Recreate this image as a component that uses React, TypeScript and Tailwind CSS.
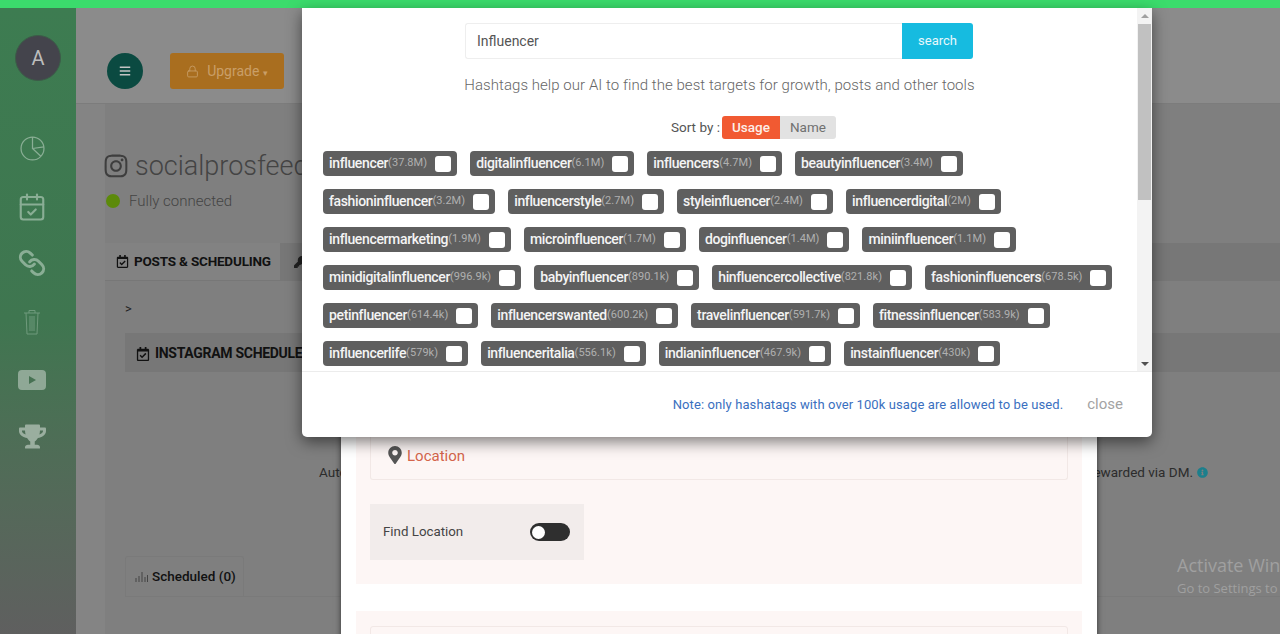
import { CalendarCheck, Link, Lock } from 'lucide-react'
import { FaBars, FaInfoCircle, FaInstagram, FaMapMarkerAlt, FaRegCalendarCheck, FaTrophy, FaKey } from 'react-icons/fa'

const rows: [string, string][][] = [
  [['influencer', '37.8M'], ['digitalinfluencer', '6.1M'], ['influencers', '4.7M'], ['beautyinfluencer', '3.4M']],
  [['fashioninfluencer', '3.2M'], ['influencerstyle', '2.7M'], ['styleinfluencer', '2.4M'], ['influencerdigital', '2M']],
  [['influencermarketing', '1.9M'], ['microinfluencer', '1.7M'], ['doginfluencer', '1.4M'], ['miniinfluencer', '1.1M']],
  [['minidigitalinfluencer', '996.9k'], ['babyinfluencer', '890.1k'], ['hinfluencercollective', '821.8k'], ['fashioninfluencers', '678.5k']],
  [['petinfluencer', '614.4k'], ['influencerswanted', '600.2k'], ['travelinfluencer', '591.7k'], ['fitnessinfluencer', '583.9k']],
  [['influencerlife', '579k'], ['influenceritalia', '556.1k'], ['indianinfluencer', '467.9k'], ['instainfluencer', '430k']],
]

function Chip({ name, count }: { name: string; count: string }) {
  return (
    <div className="flex h-[25px] items-center rounded-[4px] bg-[#5f5f5f] pl-[6px] pr-[6px]">
      <span className="text-[14px] font-medium tracking-[-0.36px] text-[#f4f4f4]">{name}</span>
      <span className="text-[11px] tracking-[0.05px] text-[#b0b0b0]">({count})</span>
      <span className="ml-[8px] h-[16px] w-[16px] rounded-[3px] bg-white"></span>
    </div>
  )
}

export default function App() {
  return (
    <div className="relative flex h-[634px] w-[1280px] flex-col overflow-hidden bg-[#7c7c7c] font-['Roboto',sans-serif]">
      <div className="h-2 shrink-0 bg-[#3bdc6c]"></div>

      <div className="flex min-h-0 flex-1">
        <aside className="flex w-[76px] shrink-0 flex-col items-center bg-gradient-to-b from-[#3d7c51] via-[#3f7650] via-50% to-[#5f5f5f]">
          <div className="mt-[27px] flex h-[46px] w-[46px] items-center justify-center rounded-full border border-[#3c5c48] bg-[#44444c] text-[20px] text-[#bdbdbd]">
            A
          </div>
          <div className="flex flex-col items-center pr-[12px] text-[#8aae95]">
            <svg className="mt-[55px] h-[25px] w-[25px]" viewBox="0 0 24 24" fill="none" stroke="currentColor" strokeWidth="1.2">
              <circle cx="12" cy="12" r="11" />
              <path d="M12 1v11l8 7.5M12 12l11-1.5" />
            </svg>
            <CalendarCheck className="mt-[31px] h-[30px] w-[30px]" strokeWidth={1.7} />
            <Link className="mt-[27px] h-[28px] w-[28px] -scale-x-100" strokeWidth={2.6} />
            <svg className="mt-[32px] h-[26px] w-[18px] text-[#6f9a7c]" viewBox="0 0 18 26" fill="none" stroke="currentColor" strokeWidth="1">
              <path d="M1 4h16M6 4V1.5h6V4M3 4l1 21h10l1-21M7 7v15M9 7v15M11 7v15" />
            </svg>
            <svg className="mt-[30px] h-[30px] w-[28px] text-[#8fa896]" viewBox="0 0 28 30" fill="currentColor">
              <path fillRule="evenodd" d="M4 5h20a4 4 0 0 1 4 4v12a4 4 0 0 1-4 4H4a4 4 0 0 1-4-4V9a4 4 0 0 1 4-4zm7 6v8l7-4z" />
            </svg>
            <FaTrophy className="mt-[28px] h-[27px] w-[27px] text-[#9aae9f]" />
          </div>
        </aside>

        <main className="flex min-w-0 flex-1 flex-col">
          <header className="flex h-[96px] shrink-0 items-center border-b border-[#7c7c7c] bg-[#8b8b8b] pl-[31px] pt-[31px]">
            <div className="flex h-[36px] w-[36px] items-center justify-center rounded-full bg-[#0b4a41] text-[#c4c4c4]">
              <FaBars className="h-[12px] w-[12px]" />
            </div>
            <div className="ml-[27px] flex h-[36px] w-[114px] items-center justify-center gap-[8px] rounded-[3px] bg-[#a96e1f] text-[14px] text-[#c99f68]">
              <Lock className="h-[13px] w-[13px]" strokeWidth={1.6} />
              <span>
                Upgrade <span className="text-[9px]">▾</span>
              </span>
            </div>
          </header>

          <div className="relative flex-1 bg-[#848484] pl-[29px]">
            <div className="flex h-full flex-col bg-[#7f7f7f]">
              <div className="-ml-[2px] flex items-center pt-[47px] text-[#3e3e3e]">
                <FaInstagram className="h-[26px] w-[26px]" />
                <span className="ml-[6px] text-[27px] leading-[30px] font-light text-[#444]">socialprosfeed</span>
              </div>
              <div className="mt-[10px] flex items-center">
                <span className="ml-[1px] h-[14px] w-[14px] rounded-full bg-[#5c8a0a]"></span>
                <span className="ml-[9px] text-[15px] leading-[20px] font-light text-[#444]">Fully connected</span>
              </div>

              <div className="mt-[32px] flex h-[38px] border-b border-[#777]">
                <div className="flex w-[175px] items-center gap-[5px] bg-[#828282] pl-[11px] text-[13.5px] font-bold tracking-[-0.2px] text-[#111]">
                  <FaRegCalendarCheck className="h-[13px] w-[13px]" />
                  <span>POSTS &amp; SCHEDULING</span>
                </div>
                <div className="flex flex-1 items-center bg-[#777] pl-[14px] text-[#222]">
                  <FaKey className="h-[12px] w-[12px]" />
                </div>
              </div>

              <div className="pl-[20px]">
                <div className="mt-[19px] text-[13px] leading-[18px] text-[#222]">&gt;</div>
                <div className="mt-[15px] flex h-[39px] items-center gap-[5px] bg-[#777] pl-[11px] pt-[2px] text-[14px] font-bold tracking-[-0.3px] text-[#111]">
                  <FaRegCalendarCheck className="h-[14px] w-[14px]" />
                  <span>INSTAGRAM SCHEDULER</span>
                </div>
                <div className="mt-[92px] flex pl-[194px] pr-[72px] text-[13.5px] leading-[16px] text-[#2c2c2c]">
                  <span>Auto</span>
                  <span className="ml-auto flex items-center gap-[4px]">
                    rewarded via DM.
                    <FaInfoCircle className="h-[11px] w-[11px] text-[#1c7f8c]" />
                  </span>
                </div>
                <div className="mt-[76px] flex h-[40px] w-[119px] items-center gap-[4px] rounded-t-[3px] border border-b-0 border-[#7a7a7a] pl-[9px] text-[13.5px] font-medium text-[#111]">
                  <svg className="h-[11px] w-[13px] text-[#444]" viewBox="0 0 13 11" fill="none" stroke="currentColor" strokeWidth="1">
                    <path d="M1 11V7M4 11V5M7 11V1M10 11V6M12.5 11V4" />
                  </svg>
                  <span>Scheduled (0)</span>
                </div>
                <div className="border-t border-[#7a7a7a]"></div>
              </div>
            </div>
          </div>
        </main>
      </div>

      {/* windows watermark */}
      <div className="absolute left-[1177px] top-[554px] whitespace-nowrap font-['Open_Sans',sans-serif] text-[#a0a0a0]">
        <div className="text-[18px] leading-[23px]">Activate Windows</div>
        <div className="text-[13px] leading-[22px]">Go to Settings to activate Windows.</div>
      </div>

      {/* modal behind */}
      <div className="absolute left-[341px] top-[200px] h-[500px] w-[756px] bg-white px-[15px] pt-[230px] shadow-[0_0_6px_rgba(0,0,0,0.6)]">
        <div className="h-[154px] bg-[#fdf6f5] px-[14px]">
          <div className="flex h-[50px] items-center gap-[5px] rounded-b-[3px] border border-t-0 border-[#f2e8e6] pl-[17px] pt-[3px]">
            <FaMapMarkerAlt className="mb-[3px] h-[18px] w-[14px] text-[#555]" />
            <span className="text-[15px] text-[#d4654b]">Location</span>
          </div>
          <div className="mt-[24px] flex h-[56px] w-[214px] items-center justify-between bg-[#f2eceb] pl-[13px] pr-[14px]">
            <span className="text-[13.3px] text-[#444]">Find Location</span>
            <span className="flex h-[18px] w-[40px] items-center rounded-full bg-[#2f2f2f] pl-[2px]">
              <span className="h-[13px] w-[13px] rounded-full bg-white"></span>
            </span>
          </div>
        </div>
        <div className="mt-[27px] h-[80px] bg-[#fdf6f5] px-[14px] pt-[15px]">
          <div className="h-full rounded-t-[3px] border border-[#f2e8e6]"></div>
        </div>
      </div>

      {/* hashtag modal */}
      <div className="absolute left-[302px] top-[8px] flex h-[429px] w-[850px] flex-col rounded-b-[5px] bg-white shadow-[0_5px_15px_rgba(0,0,0,0.5)]">
        <div className="flex h-[363px] shrink-0">
          <div className="min-w-0 flex-1 overflow-hidden">
            <div className="ml-[163px] mt-[15px] flex h-[36px] w-[508px]">
              <div className="flex flex-1 items-center rounded-l-[3px] border border-r-0 border-[#eeeeee] pl-[11px] text-[14px] text-[#555]">
                Influencer
              </div>
              <button className="w-[71px] rounded-r-[3px] bg-[#16bbe0] text-[13px] text-[#e8f8fc]">search</button>
            </div>
            <p className="mt-[16px] text-center text-[15px] leading-[20px] font-light tracking-[0.05px] text-[#666]">
              Hashtags help our AI to find the best targets for growth, posts and other tools
            </p>
            <div className="mt-[21px] flex h-[23px] items-center pl-[369px]">
              <span className="text-[13.5px] text-[#555]">Sort by :</span>
              <div className="ml-[2px] flex h-[23px] overflow-hidden rounded-[3px] text-[13.5px]">
                <span className="flex w-[58px] items-center justify-center bg-[#f15a32] font-medium text-[#fdeee9]">Usage</span>
                <span className="flex w-[56px] items-center justify-center bg-[#e2e2e2] text-[#707070]">Name</span>
              </div>
            </div>
            <div className="mt-[12px] flex flex-col gap-[13px] pl-[21px]">
              {rows.map((row, i) => (
                <div key={i} className="flex gap-[13px]">
                  {row.map(([name, count]) => (
                    <Chip key={name} name={name} count={count} />
                  ))}
                </div>
              ))}
            </div>
          </div>
          {/* scrollbar */}
          <div className="flex w-[15px] shrink-0 flex-col items-center bg-[#f3f3f3]">
            <div className="mt-[6px] h-0 w-0 border-x-[4px] border-b-[4px] border-x-transparent border-b-[#a0a0a0]"></div>
            <div className="mt-[6px] h-[176px] w-[13px] bg-[#c1c1c1]"></div>
            <div className="mt-auto mb-[5px] h-0 w-0 border-x-[4px] border-t-[4px] border-x-transparent border-t-[#505050]"></div>
          </div>
        </div>
        <div className="flex flex-1 items-center justify-end border-t border-[#ececec] pr-[29px]">
          <span className="text-[13px] tracking-[0.1px] text-[#3a6fc0]">Note: only hashatags with over 100k usage are allowed to be used.</span>
          <span className="ml-[24px] text-[15px] text-[#a3a3a3]">close</span>
        </div>
      </div>
    </div>
  )
}
